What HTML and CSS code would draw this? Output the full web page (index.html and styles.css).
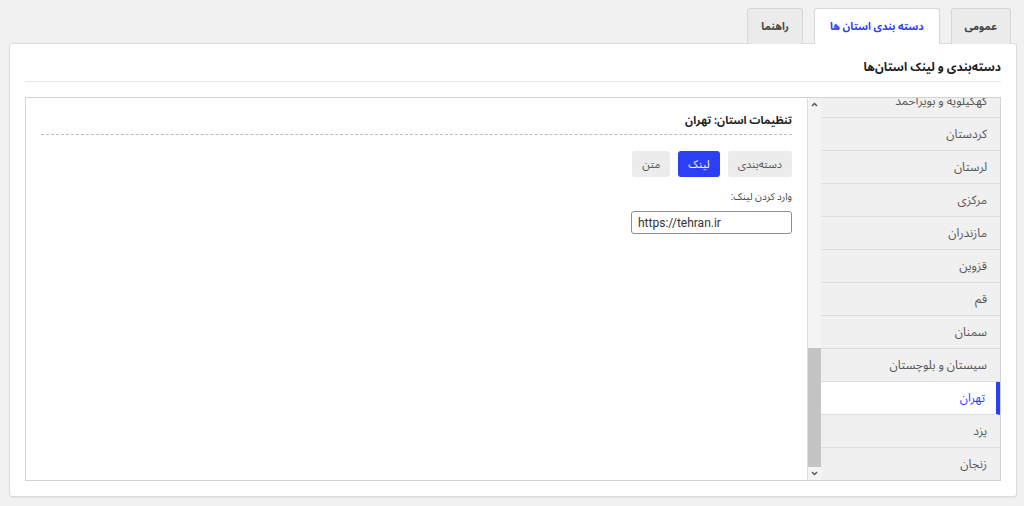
FILE: index.html
```html
<!DOCTYPE html>
<html lang="fa" dir="rtl">
<head>
<meta charset="utf-8">
<title>دسته‌بندی و لینک استان‌ها</title>
<link rel="stylesheet" href="styles.css">
</head>
<body>
<div class="wrap">
  <nav class="tabs">
    <div class="tab">عمومی</div>
    <div class="tab active">دسته بندی استان ها</div>
    <div class="tab">راهنما</div>
  </nav>
  <section class="panel">
    <h1 class="title">دسته‌بندی و لینک استان‌ها</h1>
    <div class="box">
      <div class="side">
        <ul class="list">
          <li>کهکیلویه و بویراحمد</li>
          <li>کردستان</li>
          <li>لرستان</li>
          <li>مرکزی</li>
          <li>مازندران</li>
          <li>قزوین</li>
          <li>قم</li>
          <li>سمنان</li>
          <li>سیستان و بلوچستان</li>
          <li class="active">تهران</li>
          <li>یزد</li>
          <li>زنجان</li>
        </ul>
        <div class="scrollbar" aria-hidden="true">
          <div class="sb-btn"><svg width="7" height="5" viewBox="0 0 7 5"><path d="M1 4L3.5 1.5L6 4" fill="none" stroke="#505050" stroke-width="1.3"/></svg></div>
          <div class="sb-track"><div class="sb-thumb"></div></div>
          <div class="sb-btn"><svg width="7" height="5" viewBox="0 0 7 5"><path d="M1 1L3.5 3.5L6 1" fill="none" stroke="#505050" stroke-width="1.3"/></svg></div>
        </div>
      </div>
      <div class="settings">
        <h2 class="heading">تنظیمات استان: تهران</h2>
        <div class="modes">
          <button class="mode">دسته‌بندی</button>
          <button class="mode active">لینک</button>
          <button class="mode">متن</button>
        </div>
        <label class="label" for="link">وارد کردن لینک:</label>
        <input class="input" id="link" type="text" value="https://tehran.ir">
      </div>
    </div>
  </section>
</div>
</body>
</html>
```

FILE: styles.css
```css
* { box-sizing: border-box; }
html, body { margin: 0; padding: 0; }
body {
  background: #f1f1f1;
  font-family: Roboto, "Noto Sans Arabic", sans-serif;
  color: #333;
  direction: rtl;
}
.wrap {
  padding: 8px 7px 10px 9px;
}
.tabs {
  display: flex;
  gap: 11px;
  padding-right: 6px;
  height: 35px;
}
.tab {
  height: 36px;
  padding: 0 13px;
  display: flex;
  align-items: center;
  border: 1px solid #d6d6d6;
  border-bottom: none;
  border-radius: 3px 3px 0 0;
  background: #ebebeb;
  color: #444;
  font-size: 10.5px;
  font-weight: bold;
  position: relative;
  z-index: 1;
}
.tab.active {
  background: #fff;
  color: #2b40f4;
  padding: 0 15px;
}
.panel {
  background: #fff;
  border: 1px solid #dcdcdc;
  border-radius: 3px;
  box-shadow: 0 1px 1px rgba(0,0,0,0.05);
  padding: 0 15px 15px;
}
.title {
  margin: 0;
  height: 38px;
  padding-top: 13px;
  line-height: 20px;
  font-size: 12px;
  font-weight: bold;
  color: #222;
  border-bottom: 1px solid #e8e8e8;
}
.box {
  margin-top: 15px;
  height: 384px;
  border: 1px solid #d3d3d3;
  display: flex;
}
.side {
  width: 193px;
  flex: none;
  display: flex;
  border-left: 1px solid #dedede;
}
.list {
  list-style: none;
  margin: 0;
  padding: 0;
  flex: 1;
  display: flex;
  flex-direction: column;
  justify-content: flex-end;
  overflow: hidden;
  background: #f0f0f0;
}
.list li {
  flex: none;
  height: 33px;
  line-height: 32px;
  padding-right: 13px;
  border-bottom: 1px solid #dddddd;
  font-size: 12px;
  color: #555;
  white-space: nowrap;
}
.list li:last-child {
  height: 32px;
  border-bottom: none;
}
.list li.active {
  background: #fff;
  color: #2b40f4;
  border-right: 4px solid #2b40f4;
  padding-right: 11px;
}
.scrollbar {
  width: 13px;
  flex: none;
  display: flex;
  flex-direction: column;
  background: #f4f4f4;
}
.sb-btn {
  height: 13px;
  flex: none;
  display: flex;
  align-items: center;
  justify-content: center;
}
.sb-track {
  flex: 1;
  display: flex;
  flex-direction: column;
  justify-content: flex-end;
}
.sb-thumb {
  height: 119px;
  background: #c4c4c4;
}
.settings {
  flex: 1;
  padding: 13px 15px;
}
.heading {
  margin: 0;
  font-size: 11px;
  font-weight: bold;
  color: #222;
  line-height: 20px;
  padding-bottom: 3px;
  border-bottom: 1px dashed #bdbdbd;
}
.modes {
  display: flex;
  gap: 8px;
  margin-top: 16px;
}
.mode {
  height: 26px;
  padding: 0 10px;
  border: none;
  border-radius: 3px;
  background: #ececec;
  color: #555;
  font-family: inherit;
  font-size: 11px;
}
.mode.active {
  background: #2b40f4;
  color: #fff;
}
.label {
  display: block;
  margin-top: 12px;
  font-size: 10px;
  color: #444;
  line-height: 16px;
}
.input {
  display: block;
  margin-top: 6px;
  width: 161px;
  height: 23px;
  border: 1px solid #8f8f8f;
  border-radius: 3px;
  padding: 0 6px;
  direction: ltr;
  text-align: left;
  font-family: Roboto, "Liberation Sans", sans-serif;
  font-size: 12px;
  color: #333;
  background: #fff;
}
```
